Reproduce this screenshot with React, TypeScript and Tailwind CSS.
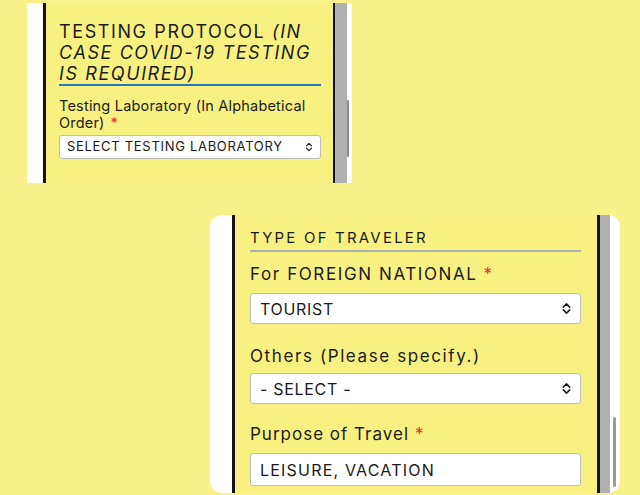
const FONT = "font-['Inter','Lato',sans-serif]";

function Chevrons({ small }: { small?: boolean }) {
  return (
    <svg
      viewBox="0 0 10 14"
      className={small ? "h-[10px] w-[8px]" : "h-[13px] w-[11px]"}
      fill="none"
      stroke="#1a1a1a"
      strokeWidth="1.6"
      strokeLinecap="round"
      strokeLinejoin="round"
    >
      <path d="M1.5 5.5 5 2l3.5 3.5M1.5 8.5 5 12l3.5-3.5" />
    </svg>
  );
}

function Req() {
  return <span className="ml-1.5 text-[#E0342B]">*</span>;
}

function SelectBox({ value }: { value: string }) {
  return (
    <div className="flex h-[31px] items-center justify-between rounded-[3px] border border-[#BDBDBD] bg-white pl-[9px] pr-[8px] text-[16px] tracking-[0.7px] text-[#1a1a1a]">
      <span>{value}</span>
      <Chevrons />
    </div>
  );
}

export default function App() {
  return (
    <div className={`h-[495px] w-[640px] overflow-hidden bg-[#F9F28B] pt-[3px] ${FONT}`}>
      {/* upper crop: testing protocol */}
      <div className="ml-[27px] flex h-[180px] w-[325px] bg-white">
        <div className="w-[16px]" />
        <div className="w-[3px] bg-[#141414]" />
        <div className="flex-1 bg-[#F8F080] pl-[13px] pr-[12px] pt-[18px] text-[#1c1c1c]">
          <h3 className="whitespace-nowrap border-b-2 border-[#2A74B9] text-[18px] font-normal leading-[21px] tracking-[1.6px]">
            TESTING PROTOCOL <i>(IN</i>
            <br />
            <i>CASE COVID-19 TESTING</i>
            <br />
            <i>IS REQUIRED)</i>
          </h3>
          <p className="mt-[11px] whitespace-nowrap text-[14.5px] leading-[17px] tracking-[0.2px]">
            Testing Laboratory (In Alphabetical
            <br />
            Order)
            <Req />
          </p>
          <div className="mt-[4px] flex h-[24px] items-center justify-between rounded-[3px] border border-[#BDBDBD] bg-white pl-[7px] pr-[7px] text-[13px] tracking-[0.7px] text-[#1a1a1a]">
            <span>SELECT TESTING LABORATORY</span>
            <Chevrons small />
          </div>
        </div>
        <div className="w-[2px] bg-[#141414]" />
        <div className="w-[12px] bg-[#B0B0B0]" />
        <div className="w-[5px] pt-[97px]">
          <div className="h-[57px] w-[2px] rounded-full bg-[#8A8A8A]" />
        </div>
      </div>

      {/* lower crop: type of traveler */}
      <div className="ml-[210px] mt-[32px] flex h-[278px] w-[410px] overflow-hidden rounded-[12px] bg-white">
        <div className="w-[22px]" />
        <div className="w-[3px] bg-[#141414]" />
        <div className="flex-1 bg-[#F8F080] pl-[15px] pr-[16px] pt-[14px] text-[#1c1c1c]">
          <h3 className="border-b-2 border-[#AEB0B3] pb-[3px] text-[15px] font-normal leading-[18px] tracking-[2.2px]">
            TYPE OF TRAVELER
          </h3>
          <p className="mt-[12px] text-[17px] leading-[20px] tracking-[1.6px]">
            For FOREIGN NATIONAL
            <Req />
          </p>
          <div className="mt-[9px]">
            <SelectBox value="TOURIST" />
          </div>
          <p className="mt-[22px] text-[17px] leading-[20px] tracking-[1.6px]">Others (Please specify.)</p>
          <div className="mt-[7px]">
            <SelectBox value="- SELECT -" />
          </div>
          <p className="mt-[20px] text-[17px] leading-[20px] tracking-[1px]">
            Purpose of Travel
            <Req />
          </p>
          <div className="mt-[9px] flex h-[33px] items-center rounded-[3px] border border-[#BDBDBD] bg-white pl-[9px] text-[16px] tracking-[1.2px] text-[#1a1a1a]">
            LEISURE, VACATION
          </div>
        </div>
        <div className="w-[3px] bg-[#141414]" />
        <div className="w-[10px] bg-[#B0B0B0]" />
        <div className="w-[10px] pl-[3px] pt-[202px]">
          <div className="h-[70px] w-[2.5px] rounded-full bg-[#9A9A9A]" />
        </div>
      </div>
    </div>
  );
}
